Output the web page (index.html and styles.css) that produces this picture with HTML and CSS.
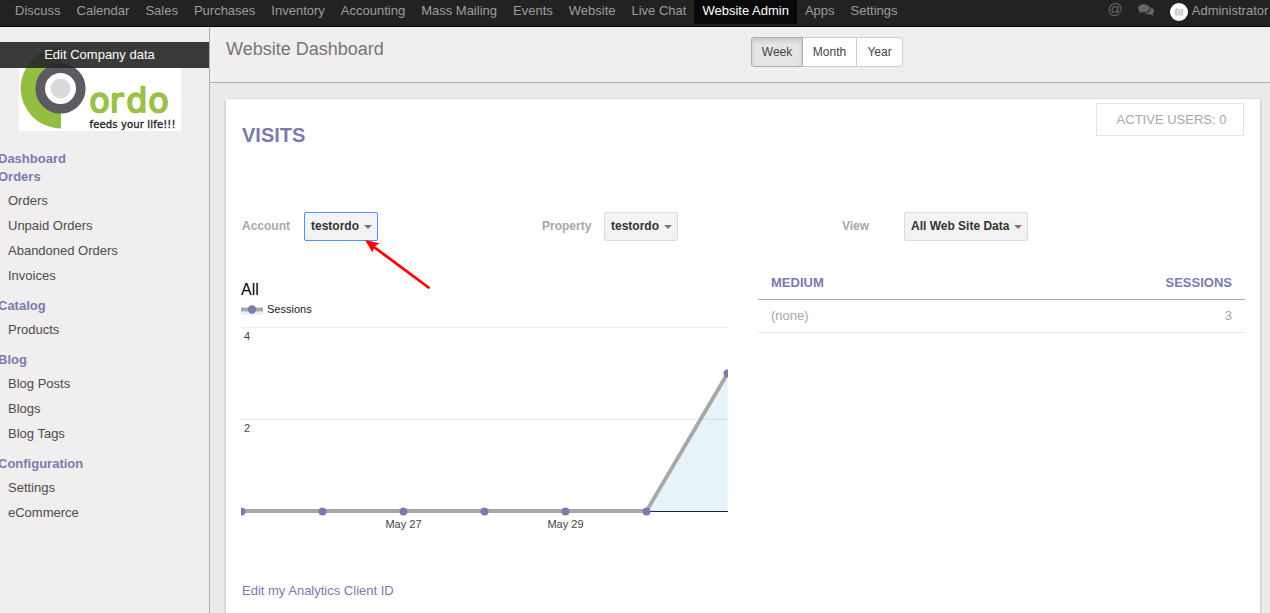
FILE: index.html
```html
<!DOCTYPE html>
<html lang="en">
<head>
<meta charset="utf-8">
<title>Website Dashboard</title>
<link rel="stylesheet" href="styles.css">
</head>
<body>
<nav class="topbar">
  <div class="menu">
    <a>Discuss</a><a>Calendar</a><a>Sales</a><a>Purchases</a><a>Inventory</a><a>Accounting</a><a>Mass Mailing</a><a>Events</a><a>Website</a><a>Live Chat</a><a class="active">Website Admin</a><a>Apps</a><a>Settings</a>
  </div>
  <div class="tray">
    <span class="at">@</span>
    <svg class="chat" width="16" height="13" viewBox="0 0 16 13"><path d="M12.5 3.2C14.600 3.700 16 5 16 6.800c0 1-.5 1.900-1.300 2.600.2.900.8 1.500 1.200 2.100-1.500 0-2.700-.7-3.400-1.200-2.300.3-4.300-.2-5.600-1.300 3.700-.2 6.300-2.600 5.600-5.800z"/><path d="M6 .2c3.200 0 5.800 1.800 5.800 4S9.200 8.200 6 8.200c-.6 0-1.200-.1-1.700-.2-.9.700-2.200 1.200-3.300 1.200.5-.5.9-1.100 1-1.900C.8 6.500 0 5.400 0 4.200 0 2 2.700.2 6 .2z"/></svg>
    <svg class="avatar" width="18" height="18" viewBox="0 0 18 18"><circle cx="9" cy="9" r="9" fill="#fff"/><rect x="5" y="6" width="8.200" height="6.400" rx=".6" fill="#c8c8c8"/><rect x="6" y="5.300" width="2.400" height="1" fill="#c8c8c8"/><circle cx="9.100" cy="9.200" r="2.100" fill="#c8c8c8" stroke="#fff" stroke-width=".8"/></svg>
    <span class="user">Administrator</span>
  </div>
</nav>
<div class="body">
  <aside class="sidebar">
    <div class="company">
      <svg class="logo" width="162" height="89" viewBox="19 42 162 89">
        <rect x="19" y="46" width="162" height="85" fill="#fff"/>
        <path d="M61 48A40.400 40.200 0 0 0 61 128.400z" fill="#94be42"/>
        <circle cx="60.500" cy="88.500" r="20.300" fill="#fff" stroke="#5b5b61" stroke-width="9.600"/>
        <circle cx="60.500" cy="88.500" r="10" fill="#d9dadc"/>
        <text class="brand" x="89.200 109.800 126.200 148.200" y="112">ordo</text>
        <text class="slogan" x="89.500" y="127.600" textLength="86">feeds your life!!!</text>
      </svg>
      <a class="edit">Edit Company data</a>
    </div>
    <div class="tree">
      <h4>Dashboard</h4>
      <h4>Orders</h4>
      <ul><li>Orders</li><li>Unpaid Orders</li><li>Abandoned Orders</li><li>Invoices</li></ul>
      <h4>Catalog</h4>
      <ul><li>Products</li></ul>
      <h4>Blog</h4>
      <ul><li>Blog Posts</li><li>Blogs</li><li>Blog Tags</li></ul>
      <h4>Configuration</h4>
      <ul><li>Settings</li><li>eCommerce</li></ul>
    </div>
  </aside>
  <main class="main">
    <header class="head">
      <h1>Website Dashboard</h1>
      <div class="range"><button class="on">Week</button><button>Month</button><button>Year</button></div>
    </header>
    <section class="card">
      <div class="cardtop">
        <h2>VISITS</h2>
        <div class="users">ACTIVE USERS: 0</div>
      </div>
      <div class="filters">
        <div class="filter"><label>Account</label><span class="select focus">testordo<i></i></span></div>
        <div class="filter"><label>Property</label><span class="select">testordo<i></i></span></div>
        <div class="filter"><label>View</label><span class="select">All Web Site Data<i></i></span></div>
        <svg class="pointer" width="68" height="52" viewBox="0 0 68 52"><path d="M63.500 47.500L9 7" stroke="red" stroke-width="2.800" stroke-linecap="round"/><path d="M0 0L14.500 3.300 9.500 6.500 7.500 12.500z" fill="red"/></svg>
      </div>
      <div class="data">
        <svg class="chart" width="487" height="260" viewBox="241 275 487 260">
          <text class="title" x="241" y="295">All</text>
          <rect x="241" y="310" width="22" height="5" fill="#e5f3f9"/>
          <path class="line" d="M241 309.500h22"/>
          <circle class="dot" cx="252" cy="309.500" r="4.200"/>
          <text class="legend" x="267" y="313">Sessions</text>
          <path d="M241 327.500h487M241 419.500h487" stroke="#ebebeb"/>
          <path d="M241 511.500h487" stroke="#222"/>
          <path d="M646.500 511L727.500 373.500V511z" fill="#0590c7" fill-opacity=".1"/>
          <path class="line" d="M241 511H646.500L727.500 373.500"/>
          <g class="dot"><circle cx="241.500" cy="511.500" r="4"/><circle cx="322.500" cy="511.500" r="4"/><circle cx="403.500" cy="511.500" r="4"/><circle cx="484.500" cy="511.500" r="4"/><circle cx="565.500" cy="511.500" r="4"/><circle cx="646.500" cy="511.500" r="4"/><circle cx="727.500" cy="373.500" r="4"/></g>
          <text class="tick" x="244" y="340">4</text>
          <text class="tick" x="244" y="432">2</text>
          <text class="tick" x="403.500" y="528" text-anchor="middle">May 27</text>
          <text class="tick" x="565.500" y="528" text-anchor="middle">May 29</text>
        </svg>
        <table>
          <thead><tr><th>MEDIUM</th><th>SESSIONS</th></tr></thead>
          <tbody><tr><td>(none)</td><td>3</td></tr></tbody>
        </table>
      </div>
      <a class="client">Edit my Analytics Client ID</a>
    </section>
  </main>
</div>
</body>
</html>
```
FILE: styles.css
```css
* { box-sizing: border-box; }
body {
  margin: 0;
  height: 613px;
  overflow: hidden;
  display: flex;
  flex-direction: column;
  font: 13px/18px "Liberation Sans", Arial, sans-serif;
  color: #4c4c4c;
  background: #ebebeb;
}
.topbar {
  flex: none;
  height: 27px;
  display: flex;
  justify-content: space-between;
  background: #222;
  border-bottom: 1px solid #080808;
  color: #9d9d9d;
  white-space: nowrap;
}
.menu { display: flex; padding-left: 7.1px; }
.menu a { height: 24px; padding: 2px 8px; }
.menu .active { background: #080808; color: #fff; }
.tray { display: flex; align-items: flex-start; padding-right: 1.700px; }
.at { font-size: 15px; color: #666; margin-right: 15px; }
.chat { fill: #666; margin: 4px 16px 0 0; }
.avatar { margin: 3px 4px 0 0; }
.user { padding-top: 2px; }

.body { flex: 1; display: flex; min-height: 0; }
.sidebar { flex: none; width: 210px; background: #f0eeee; border-right: 1px solid #afafb6; }
.company { position: relative; padding-top: 15px; height: 123px; }
.logo { display: block; margin-left: 19px; }
.brand { font: 33.5px "DejaVu Sans", sans-serif; text-rendering: geometricPrecision; fill: #9ac04a; stroke: #9ac04a; stroke-width: 1.800px; stroke-linejoin: round; }
.slogan { font: 10px "DejaVu Sans", sans-serif; fill: #222; stroke: #222; stroke-width: .3px; }
.edit {
  position: absolute;
  top: 15px;
  left: 0;
  width: 209px;
  height: 26px;
  padding: 4px 10px 0 0;
  text-align: center;
  color: #fff;
  background: rgba(37, 37, 37, .9);
}
.tree h4 { margin: 0 0 0 -2px; font-size: 13px; line-height: 18px; color: #7c7bad; }
.tree ul { list-style: none; margin: 0; padding: 2px 0 0 8px; }
.tree li { height: 25px; line-height: 25px; }
.tree ul + h4 { margin-top: 9px; }

.main { flex: 1; display: flex; flex-direction: column; min-width: 0; }
.head {
  flex: none;
  height: 56px;
  display: flex;
  align-items: flex-start;
  padding: 10px 0 0 16px;
  background: #f0eeee;
  border-bottom: 1px solid #afafb6;
}
h1 { margin: 2px 0 0; width: 525px; font-size: 18px; line-height: 20px; font-weight: normal; color: #777; }
.range { display: flex; }
.range button {
  width: 55px;
  height: 30px;
  padding: 0;
  margin-right: -1px;
  font: 12px "Liberation Sans", Arial, sans-serif;
  color: #444;
  background: #fff;
  border: 1px solid #ccc;
}
.range button:first-child { width: 52px; border-radius: 3px 0 0 3px; }
.range button:last-child { width: 47px; border-radius: 0 3px 3px 0; }
.range .on { z-index: 1; background: #e6e6e6; border-color: #adadad; box-shadow: inset 0 3px 5px rgba(0, 0, 0, .125); }

.card { flex: 1; margin: 16px 10px 0 16px; background: #fff; box-shadow: 0 1px 3px rgba(0, 0, 0, .3); }
.cardtop { height: 113px; display: flex; justify-content: space-between; padding: 4px 16px 0; }
h2 { margin: 20px 0 0; font-size: 20px; line-height: 24px; color: #7c7bad; }
.users { width: 148px; height: 33px; border: 1px solid #e6e6e6; line-height: 31px; text-align: center; color: #a8a8a8; padding-left: 3px; }
.filters { position: relative; display: flex; padding-left: 16px; height: 63px; font-size: 12px; font-weight: bold; }
.filter { width: 300px; display: flex; align-items: flex-start; }
.filter label { width: 62px; line-height: 29px; color: #a8a8a8; }
.select {
  display: flex;
  align-items: center;
  height: 29px;
  padding: 0 5px 2px 6px;
  border: 1px solid #dcdcdc;
  border-radius: 2px;
  background: linear-gradient(#f5f5f5, #f1f1f1);
  color: #333;
}
.select.focus { border-color: #4d90fe; }
.select i { margin: 3px 0 0 5px; border: 4px solid transparent; border-top-color: #777; border-bottom: 0; }
.pointer { position: absolute; left: 139px; top: 28px; fill: none; }
.data { display: flex; align-items: flex-start; padding-left: 15px; }
.chart { flex: none; margin-right: 30px; }
.title { font-size: 16px; fill: #000; }
.legend { font-size: 11px; fill: #222; }
.tick { font-size: 11px; fill: #444; }
.line { fill: none; stroke: #a8a8a8; stroke-width: 4px; }
.chart path.line { stroke-width: 3.800px; }
.dot { fill: #7c7bad; }
table { width: 487px; border-collapse: collapse; margin-top: -9px; }
th, td { height: 33px; padding: 0 13px; text-align: left; }
th { padding-top: 2px; color: #7c7bad; border-bottom: 1px solid #a8a8a8; }
td { color: #a8a8a8; border-bottom: 1px solid #e6e6e6; }
th:last-child, td:last-child { text-align: right; }
.client { display: block; margin: 47px 0 0 16px; color: #7c7bad; }
```
